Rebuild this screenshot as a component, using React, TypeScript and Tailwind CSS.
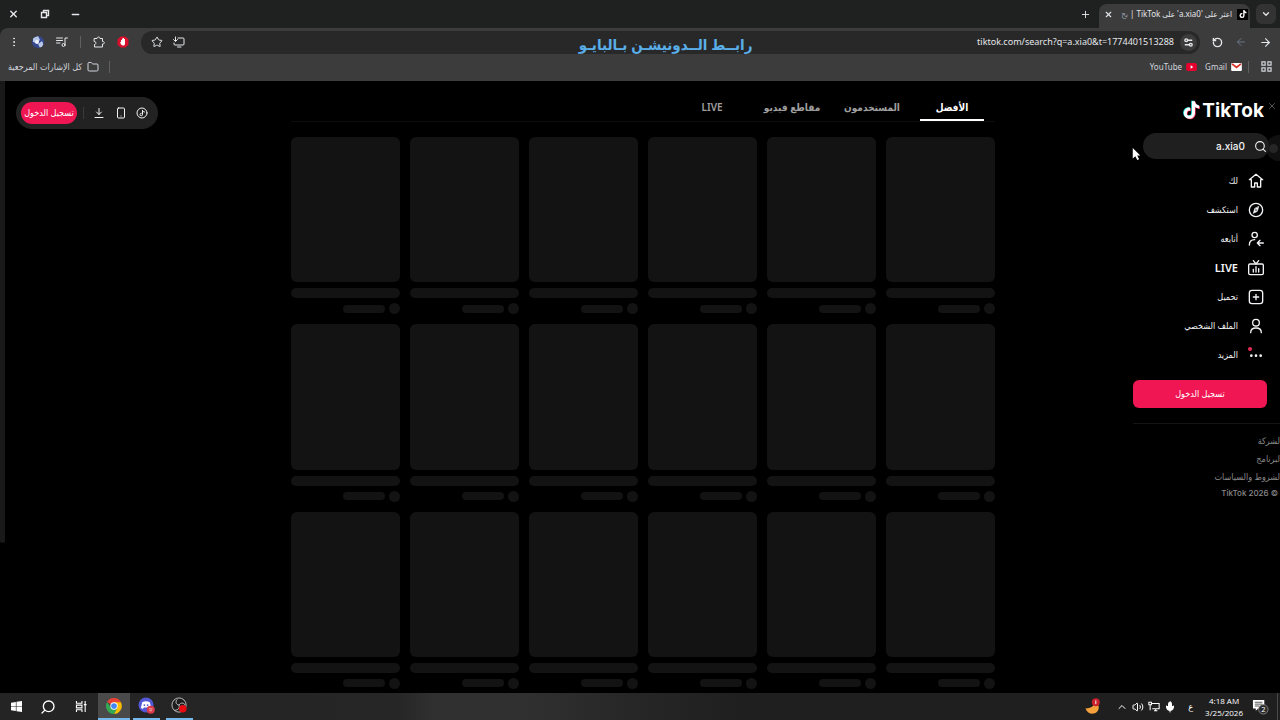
import type { ReactNode } from "react";
import {
  ArrowLeft,
  ArrowRight,
  ChevronDown,
  ChevronUp,
  EllipsisVertical,
  Folder,
  Mic,
  Minus,
  Plus,
  RotateCcw,
  Search,
  Settings2,
  Smartphone,
  Star,
  Volume2,
  X,
} from "lucide-react";

const NOTE =
  "M448,209.91a210.06,210.06,0,0,1-122.77-39.25V349.38A162.55,162.55,0,1,1,185,188.31V278.2a74.62,74.62,0,1,0,52.23,71.18V0l88,0a121.18,121.18,0,0,0,1.86,22.17h0A122.18,122.18,0,0,0,381,102.39a121.43,121.43,0,0,0,67,20.14Z";

const TABS = ["الأفضل", "المستخدمون", "مقاطع فيديو", "LIVE"];

const FOOTER = ["لشركة", "لبرنامج", "لشروط والسياسات"];

const stroke = {
  fill: "none",
  stroke: "currentColor",
  strokeWidth: 2,
  strokeLinecap: "round" as const,
  strokeLinejoin: "round" as const,
};

const NAV = [
  {
    label: "لك",
    icon: <path d="M12 2 2 10h3v11h5v-6h4v6h5V10h3z" />,
  },
  {
    label: "استكشف",
    icon: (
      <>
        <circle cx="12" cy="12" r="10" />
        <path d="m16 7-2 7-6 3 2-7z" fill="currentColor" strokeWidth="1" />
        <circle cx="12" cy="12" r="1" fill="#000" stroke="none" />
      </>
    ),
  },
  {
    label: "أتابعه",
    icon: (
      <>
        <circle cx="10" cy="6" r="4" />
        <path d="M2 21c0-5 3-8 8-8M23 18h-9M18 14l-4 4 4 4" />
      </>
    ),
  },
  {
    label: "LIVE",
    icon: (
      <>
        <rect x="1" y="6" width="22" height="16" rx="2" />
        <path d="M8 1l4 5 4-5M8 14v4M12 10v8M16 13v5" />
      </>
    ),
  },
  {
    label: "تحميل",
    icon: (
      <>
        <rect x="2" y="2" width="20" height="20" rx="4" />
        <path d="M12 8v8M8 12h8" />
      </>
    ),
  },
  {
    label: "الملف الشخصي",
    icon: (
      <>
        <circle cx="12" cy="7" r="5" />
        <path d="M4 22c0-5 3-7 8-7s8 2 8 7" />
      </>
    ),
  },
  {
    label: "المزيد",
    badge: true,
    icon: (
      <>
        <circle cx="5" cy="13" r="1" />
        <circle cx="12" cy="13" r="1" />
        <circle cx="19" cy="13" r="1" />
      </>
    ),
  },
];

function Icon({ children }: { children: ReactNode }) {
  return (
    <svg viewBox="0 0 24 24" className="h-3 w-3" {...stroke}>
      {children}
    </svg>
  );
}

function TitleBar() {
  return (
    <div className="flex h-7 items-end bg-[#1f2120] pr-1 pl-2 text-gray-200">
      <button aria-label="بحث في علامات التبويب" className="mb-1 flex h-5 w-5 items-center justify-center rounded-md bg-[#333]">
        <ChevronDown size={10} strokeWidth={3} />
      </button>
      <div className="mr-[6px] flex h-6 w-[151px] items-center gap-[5px] rounded-t-lg bg-[#3c3c3c] pr-[2px] pb-1 pl-[5px]">
        <span className="flex h-[11px] w-[11px] shrink-0 items-center justify-center bg-black">
          <svg viewBox="0 0 448 512" className="h-2 w-2" fill="#fff">
            <path d={NOTE} />
          </svg>
        </span>
        <span className="flex-1 text-[8px] leading-4 whitespace-nowrap">
          اعثر على &apos;a.xia0&apos; على TikTok | <span className="text-gray-400">بح</span>
        </span>
        <button aria-label="إغلاق علامة التبويب" className="shrink-0">
          <X size={9} strokeWidth={3} />
        </button>
      </div>
      <button aria-label="علامة تبويب جديدة" className="mr-2 mb-2">
        <Plus size={11} />
      </button>
      <div className="mr-auto mb-2 flex gap-5">
        <button aria-label="تصغير" className="flex w-[11px] items-center justify-center">
          <Minus size={11} strokeWidth={3} />
        </button>
        <button aria-label="استعادة" className="flex w-[11px] items-center justify-center">
          <svg viewBox="0 0 10 10" className="h-[10px] w-[10px]" fill="none" stroke="currentColor" strokeWidth="1.4">
            <path d="M1.5 3.5h5v5h-5zM3.5 3.5v-2h5v5h-2" />
          </svg>
        </button>
        <button aria-label="إغلاق" className="flex w-[11px] items-center justify-center">
          <X size={12} strokeWidth={3} />
        </button>
      </div>
    </div>
  );
}

function Toolbar() {
  return (
    <div className="bg-[#1f2120]">
      <div className="flex h-7 items-center rounded-tl-lg bg-[#3c3c3c] px-2 text-gray-200">
        <div className="flex gap-3">
          <button aria-label="رجوع"><ArrowRight size={13} /></button>
          <button aria-label="تقدم" className="text-gray-500"><ArrowLeft size={12} /></button>
          <button aria-label="إعادة تحميل"><RotateCcw size={11} strokeWidth={3} /></button>
        </div>
        <div className="mr-3 flex h-[23px] flex-1 items-center rounded-full bg-[#282828] pr-[3px] pl-[10px]">
          <button aria-label="معلومات الموقع" className="flex h-[17px] w-[17px] items-center justify-center rounded-full bg-[#3c3c3c]">
            <Settings2 size={11} strokeWidth={3} />
          </button>
          <input
            dir="ltr"
            aria-label="شريط العناوين"
            defaultValue="tiktok.com/search?q=a.xia0&t=1774401513288"
            className="mr-1 min-w-0 flex-1 bg-transparent pr-[2px] text-right text-[9px] leading-4 outline-none"
          />
          <div className="flex gap-[10px]">
            <button aria-label="تثبيت">
              <Icon>
                <path d="M10 4h10a2 2 0 0 1 2 2v10a2 2 0 0 1-2 2H4a2 2 0 0 1-2-2v-2M9 22h7M5 2v8M1 7l4 4 4-4" />
              </Icon>
            </button>
            <button aria-label="إضافة إشارة"><Star size={12} /></button>
          </div>
        </div>
        <div className="mr-3 flex items-center gap-3">
          <button aria-label="مانع الإعلانات">
            <svg viewBox="0 0 24 24" className="h-3 w-3">
              <path d="M7 1h10l6 6v10l-6 6H7l-6-6V7z" fill="#d8102c" />
              <path d="M8 8h2V5h2v3-4h2v5-3h2v9c0 3-1 4-4 4s-4-2-6-6l2-1z" fill="#fff" />
            </svg>
          </button>
          <button aria-label="الإضافات">
            <Icon>
              <path d="M3 5h5c0-4 6-4 6 0h5v6c5 0 5 5 0 5v6H3v-5c4 0 4-6 0-6z" />
            </Icon>
          </button>
          <span className="h-3 w-px bg-[#606060]" />
          <button aria-label="التحكم في الوسائط">
            <Icon>
              <path d="M1 4h12M1 9h12M1 14h7M18 18V4h5" />
              <circle cx="15" cy="18" r="3" />
            </Icon>
          </button>
          <button aria-label="الملف" className="h-3 w-3 overflow-hidden rounded-full">
            <svg viewBox="0 0 12 12">
              <rect width="12" height="12" fill="#34478f" />
              <path d="M1 2l5-2 2 4-3 3-4-1zM6 8l4-3 2 5-4 2z" fill="#b9c8e8" />
              <circle cx="5" cy="6" r="2" fill="#eef2fa" />
            </svg>
          </button>
          <button aria-label="القائمة"><EllipsisVertical size={12} /></button>
        </div>
      </div>
    </div>
  );
}

function Bookmarks() {
  return (
    <div className="flex h-[25px] items-center bg-[#3c3c3c] px-2 pb-1 text-[9px] leading-4 text-gray-300">
      <button aria-label="التطبيقات">
        <svg viewBox="0 0 12 12" className="h-[11px] w-[11px]" fill="none" stroke="currentColor" strokeWidth="1.3">
          <path d="M1 1h3.5v3.5H1zM7.5 1H11v3.5H7.5zM1 7.5h3.5V11H1zM7.5 7.5H11V11H7.5z" />
        </svg>
      </button>
      <span className="mr-3 h-3 w-px bg-[#606060]" />
      <a href="#gmail" className="mr-[6px] flex items-center gap-1 text-[8px]">
        <svg viewBox="0 0 12 9" className="h-2 w-[11px]">
          <rect width="12" height="9" rx="1" fill="#fff" />
          <path d="M1 1l5 4 5-4" fill="none" stroke="#d93025" strokeWidth="2" />
        </svg>
        Gmail
      </a>
      <a href="#youtube" className="mr-2 flex items-center gap-1 text-[8px]">
        <svg viewBox="0 0 12 9" className="h-2 w-[11px]">
          <rect width="12" height="9" rx="2" fill="#e6002d" />
          <path d="M5 2.5l3 2-3 2z" fill="#fff" />
        </svg>
        YouTube
      </a>
      <span className="mr-auto h-3 w-px bg-[#606060]" />
      <button className="mr-[10px] flex items-center gap-[5px]">
        <Folder size={12} />
        كل الإشارات المرجعية
      </button>
    </div>
  );
}

function Sidebar() {
  return (
    <aside className="relative w-[147px] shrink-0 pt-[17px]">
      <a href="#home" dir="ltr" className="mr-4 flex h-6 items-center justify-end gap-[2px]">
        <svg viewBox="-24 -24 496 560" className="h-5 w-[17px]">
          <path d={NOTE} fill="#25f4ee" transform="translate(-20 -14)" />
          <path d={NOTE} fill="#fe2c55" transform="translate(20 14)" />
          <path d={NOTE} fill="#fff" />
        </svg>
        <span className="pt-[2px] font-['Inter'] text-[19px] leading-6 font-bold text-white">TikTok</span>
      </a>
      {/* drawer controls at the window edge */}
      <button aria-label="إغلاق" className="absolute top-[17px] right-0 flex h-4 w-4 items-center justify-center text-[#666]">
        <X size={10} />
      </button>
      <span className="absolute top-[54px] right-0 flex h-[26px] w-[14px] items-center justify-center rounded-l-full bg-[#101010]">
        <span className="h-[9px] w-[9px] rounded-full bg-[#262626]" />
      </span>
      <label className="relative mt-[11px] mr-[11px] flex h-[26px] w-[126px] items-center rounded-full bg-[#1f1f1f] pr-[2px]">
        <Search size={13} className="shrink-0" />
        <input
          dir="ltr"
          aria-label="بحث"
          defaultValue="a.xia0"
          className="mr-[9px] w-full min-w-0 bg-transparent text-right font-['Inter'] text-[10px] leading-4 font-medium outline-none"
        />
      </label>
      <nav className="mt-[7px]">
        {NAV.map((item) => (
          <a
            key={item.label}
            href="#nav"
            className="relative flex h-[29px] items-center gap-[10px] pr-4 text-[9px] leading-4"
          >
            <svg viewBox="0 0 24 24" className="h-4 w-4 shrink-0" {...stroke}>
              {item.icon}
            </svg>
            {item.label === "LIVE" ? <span className="text-[11px] font-semibold">LIVE</span> : item.label}
            {item.badge && <span className="absolute top-[7px] right-7 h-1 w-1 rounded-full bg-[#ea2a55]" />}
          </a>
        ))}
      </nav>
      <button className="mt-[11px] mr-[13px] block h-7 w-[134px] rounded-md bg-[#ef1653] text-[9px] leading-4 text-white">
        تسجيل الدخول
      </button>
      <div className="mt-[15px] h-px bg-[#141414]" />
      <div className="pt-2 text-[9px] leading-[18px] text-[#8a8a8a]">
        {FOOTER.map((f) => (
          <a key={f} href="#footer" className="block">
            {f}
          </a>
        ))}
        <p dir="ltr" className="mr-[2px] text-right font-['Inter'] text-[8px] leading-[14px] font-medium">
          TikTok 2026 ©
        </p>
      </div>
    </aside>
  );
}

function Results() {
  return (
    <main className="mr-[138px] min-w-0 flex-1 pt-[14px]">
      <div role="tablist" className="flex h-[27px] gap-4 border-b border-[#0d0d0d] pr-[11px] text-[10px] leading-4 font-semibold">
        {TABS.map((tab, i) => (
          <button
            key={tab}
            role="tab"
            aria-selected={i === 0}
            className={
              i === 0
                ? "h-[26px] w-16 border-b-2 border-white whitespace-nowrap text-white"
                : "h-[26px] w-16 border-b-2 border-transparent whitespace-nowrap text-[#a0a0a0]"
            }
          >
            {tab}
          </button>
        ))}
      </div>
      <div className="mt-[15px] grid grid-cols-6 gap-[10px]">
        {Array.from({ length: 18 }, (_, i) => (
          <div key={i}>
            <div className="aspect-[3/4] rounded-md bg-[#131313]" />
            <div className="mt-[6px] h-[10px] rounded-full bg-[#131313]" />
            <div className="mt-[5px] flex h-[11px] items-center gap-1">
              <span className="h-[11px] w-[11px] rounded-full bg-[#131313]" />
              <span className="h-2 w-[42px] rounded-full bg-[#131313]" />
            </div>
          </div>
        ))}
      </div>
    </main>
  );
}

function AccountBar() {
  return (
    <div className="w-[291px] shrink-0 pt-4">
      <div className="mr-auto ml-4 flex h-8 w-[142px] items-center rounded-full bg-[#222] pr-[10px] pl-[5px] text-gray-100">
        <button aria-label="عملات">
          <Icon>
            <circle cx="12" cy="12" r="10" />
            <path d="M13 7v8a2.5 2.5 0 1 1-2.5-2.5M13 7c.5 2 2 3 4 3" />
          </Icon>
        </button>
        <button aria-label="تطبيق الهاتف" className="mr-[9px]"><Smartphone size={12} /></button>
        <button aria-label="تنزيل" className="mr-[10px]">
          <Icon>
            <path d="M12 3v12M7 10l5 5 5-5M4 21h16" />
          </Icon>
        </button>
        <span className="mr-[9px] h-3 w-px bg-[#3a3a3a]" />
        <button className="mr-auto h-[22px] w-14 rounded-full bg-[#ef1653] text-[9px] leading-4 whitespace-nowrap text-white">
          تسجيل الدخول
        </button>
      </div>
    </div>
  );
}

function Taskbar() {
  return (
    <footer
      dir="ltr"
      className="flex h-[27px] shrink-0 items-center justify-between bg-[linear-gradient(to_right,#242424_0%,#262626_31%,#303030_34%,#303030_41%,#262626_50%,#1f1f1f_58%,#1f1f1f_100%)] text-white"
    >
      <div className="flex h-full items-center">
        <button aria-label="Start" className="flex w-8 justify-center">
          <svg viewBox="0 0 12 12" className="h-[11px] w-[11px]" fill="currentColor">
            <path d="M0 1.8 5.3 1v4.7H0zM6 .9 12 0v5.7H6zM0 6.3h5.3V11L0 10.2zM6 6.3h6V12l-6-.9z" />
          </svg>
        </button>
        <button aria-label="Search" className="flex w-8 justify-center">
          <Search size={16} className="-scale-x-100" />
        </button>
        <button aria-label="Task view" className="flex w-[34px] justify-center">
          <svg viewBox="0 0 14 12" className="h-[11px] w-[13px]" fill="none" stroke="currentColor" strokeWidth="1.2">
            <path d="M1.5 0v2.5h6V0M1.5 4.5h6v3h-6zM1.5 12V9.5h6V12M11 0v12M9.5 4h3" />
          </svg>
        </button>
        <button aria-label="Chrome" className="flex h-full w-8 items-center justify-center border-b-2 border-[#76b9ed] bg-[#4a4a4a]">
          <svg viewBox="0 0 48 48" className="h-4 w-4">
            <path d="M24 24 3.2 12A24 24 0 0 1 44.8 12z" fill="#ea4335" />
            <path d="M24 13h20.8A24 24 0 0 1 24 48L33 29z" fill="#fbbc04" />
            <path d="M3.2 12A24 24 0 0 0 24 48l10-18-19 0z" fill="#34a853" />
            <circle cx="24" cy="24" r="11" fill="#fff" />
            <circle cx="24" cy="24" r="8.5" fill="#4285f4" />
          </svg>
        </button>
        <button aria-label="Discord" className="ml-[3px] flex h-full w-[27px] items-center justify-center border-b-2 border-[#76b9ed]">
          <svg viewBox="0 0 18 18" className="h-[17px] w-[17px]">
            <circle cx="8.5" cy="8.5" r="8" fill="#5358d6" />
            <path d="M4.5 5.5c2.5-1.3 5.5-1.3 8 0l1.5 6c-1 1-2 1-2.7.7l-.6-1H6.3l-.6 1c-.7.3-1.7.3-2.7-.7z" fill="#fff" />
            <circle cx="6.8" cy="8.6" r="1" fill="#5358d6" />
            <circle cx="10.2" cy="8.6" r="1" fill="#5358d6" />
            <circle cx="13.5" cy="13.5" r="4.3" fill="#d83a48" />
            <path d="M11.5 12.5h4M12 14.5h3" stroke="#f5b5b9" strokeWidth="1" />
          </svg>
        </button>
        <button aria-label="OBS" className="ml-[6px] flex h-full w-[27px] items-center justify-center border-b-2 border-[#76b9ed]">
          <svg viewBox="0 0 18 18" className="h-[17px] w-[17px]">
            <circle cx="8.5" cy="8.5" r="7.5" fill="#1d1d1d" stroke="#c4c4c4" />
            <path d="M8.5 8.5C5 8 4.5 5 6.5 2.5M8.5 8.5c2-3 5-2.5 6.5 0M8.5 8.5c1 3-1 5.5-4.5 5.5" fill="none" stroke="#c4c4c4" />
            <circle cx="12.5" cy="12.5" r="4" fill="#e80c12" />
          </svg>
        </button>
      </div>
      <div className="flex h-full items-center">
        <svg viewBox="0 0 18 18" className="h-[17px] w-[17px]">
          <path d="M11 3c1 4-2 8-9.5 8 1.5 4 5 6 8.5 5.5 4-.5 6-4 5.5-7.5C15 6 13 4 11 3z" fill="#f5a23c" />
          <circle cx="12.5" cy="4.5" r="4.2" fill="#c8202c" />
          <path d="M12.5 2.5v4" stroke="#fff" />
        </svg>
        <div className="ml-[15px] flex items-center gap-1">
          <ChevronUp size={12} />
          <Volume2 size={12} />
          <svg viewBox="0 0 14 12" className="h-[11px] w-3" fill="none" stroke="currentColor" strokeWidth="1.2">
            <path d="M4.5 2.5H13v6H5M7 11h4M9 8.5V11M1 1h3v3H1zM2.5 4v6.5" />
          </svg>
          <Mic size={12} fill="currentColor" />
        </div>
        <span className="ml-3 text-[9px] leading-3">ع</span>
        <div className="ml-3 text-center font-['Open_Sans'] text-[8px] leading-3 whitespace-nowrap">
          <p>4:18 AM</p>
          <p>3/25/2026</p>
        </div>
        <button aria-label="Notifications" className="mr-1 ml-[9px]">
          <svg viewBox="0 0 18 18" className="h-[17px] w-[17px]">
            <path d="M1 2h12v9H6.5L4 13.5V11H1z" fill="#fff" />
            <path d="M3 4.5h8M3 6.5h8M3 8.5h5" stroke="#222" strokeWidth=".8" />
            <circle cx="12" cy="12" r="5" fill="#2b2b2b" stroke="#999" strokeWidth=".8" />
            <text x="12" y="15" textAnchor="middle" fontSize="8" fill="#fff">2</text>
          </svg>
        </button>
        <span className="mr-[2px] ml-1 h-full w-px bg-[#4a4a4a]" />
      </div>
    </footer>
  );
}

export default function App() {
  return (
    <div
      dir="rtl"
      className="relative flex h-screen flex-col overflow-hidden bg-black font-['Noto_Sans','DejaVu_Sans_Condensed','DejaVu_Sans',sans-serif] text-gray-100"
    >
      <header className="shrink-0">
        <TitleBar />
        <Toolbar />
        <Bookmarks />
      </header>
      <div className="flex min-h-0 flex-1 overflow-hidden">
        <Sidebar />
        <Results />
        <AccountBar />
      </div>
      <Taskbar />

      {/* page scrollbar */}
      <div className="absolute top-[81px] left-0 h-[462px] w-[5px] rounded-b bg-[#191919]" />

      {/* stream caption */}
      <p className="absolute top-8 left-[52%] -translate-x-1/2 text-[15px] leading-6 font-bold whitespace-nowrap text-[#5aaee8]">
        رابــط الــدونيشـن بـالبايـو
      </p>

      {/* mouse pointer */}
      <svg viewBox="0 0 12 18" className="absolute top-[147px] right-[139px] h-[14px] w-[9px]">
        <path d="M1 1v14l3.5-3 2.5 5 2.5-1-2.5-5H11z" fill="#fff" />
      </svg>
    </div>
  );
}
